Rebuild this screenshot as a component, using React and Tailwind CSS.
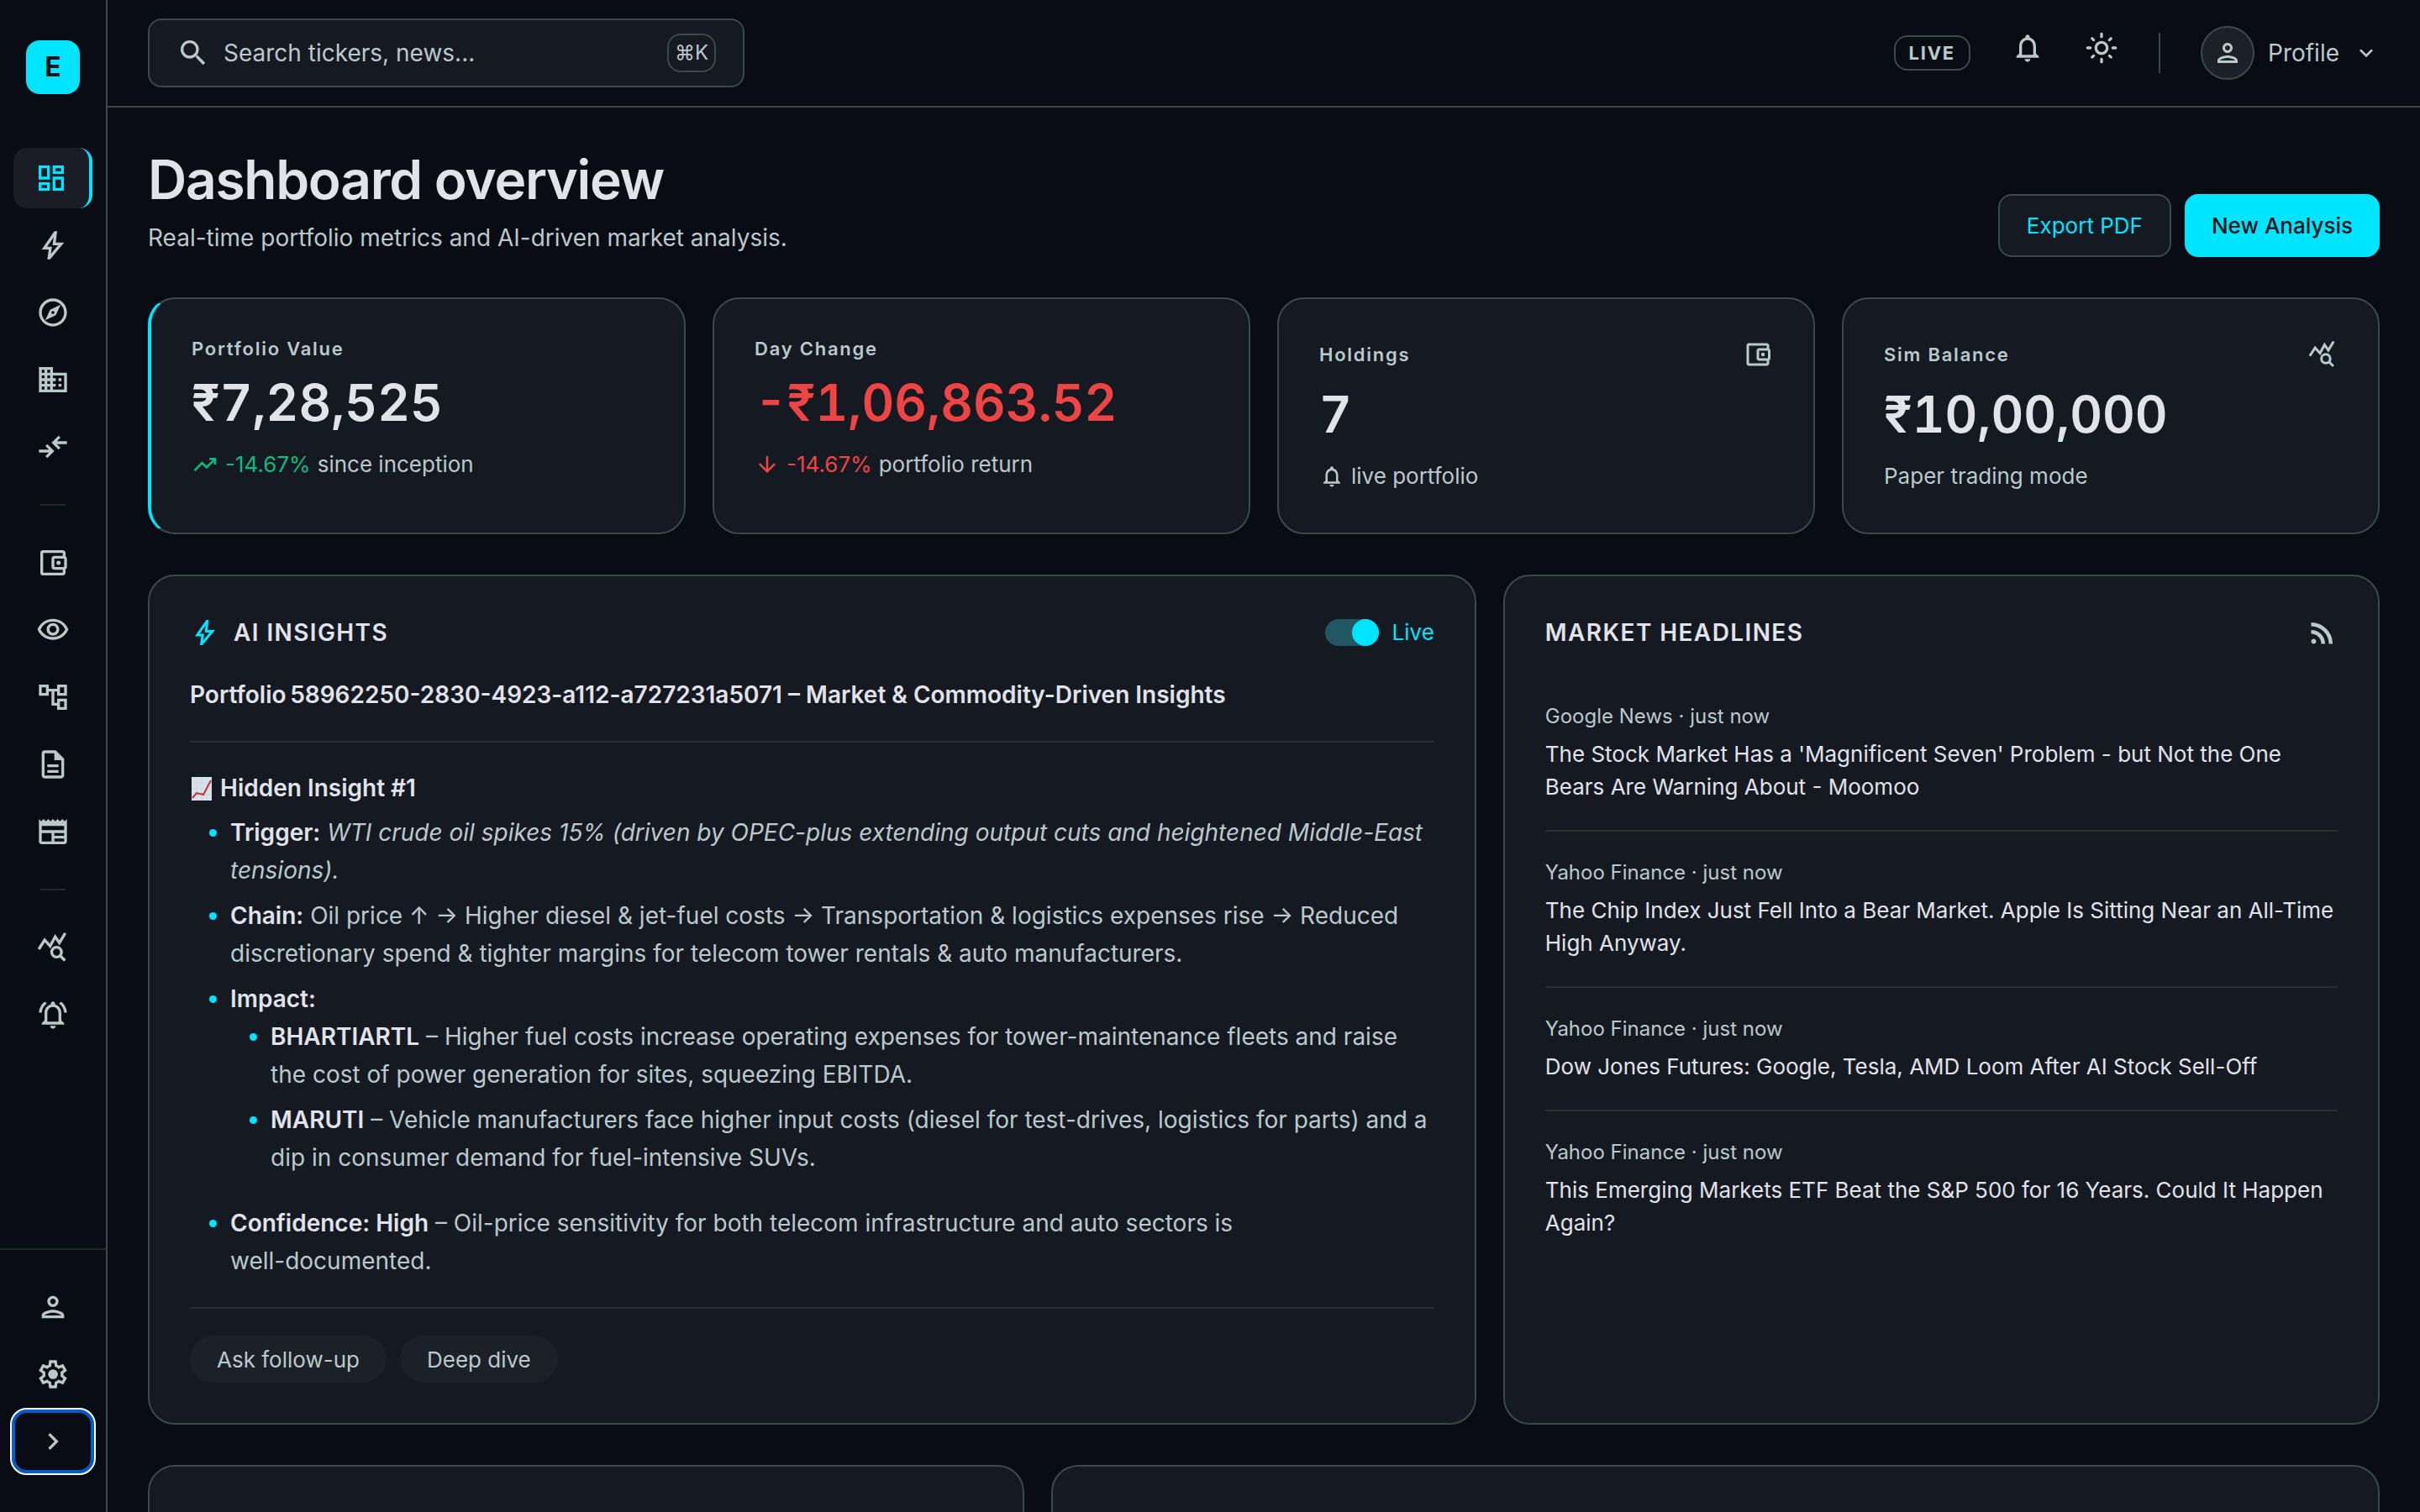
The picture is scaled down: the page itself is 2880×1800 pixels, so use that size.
import {
  MdChevronRight,
  MdDomain,
  MdExpandMore,
  MdOutlineAccountBalanceWallet,
  MdOutlineAccountTree,
  MdOutlineDescription,
  MdOutlineExplore,
  MdOutlineLightMode,
  MdOutlineNewspaper,
  MdOutlineNotifications,
  MdOutlineNotificationsActive,
  MdOutlinePerson,
  MdOutlineVisibility,
  MdSearch,
} from 'react-icons/md'

// Material Symbols outlines that react-icons only ships in the older style
function Symbol({ d, className }) {
  return (
    <svg viewBox="0 -960 960 960" fill="currentColor" aria-hidden="true" className={className}>
      <path d={d} />
    </svg>
  )
}

const DashboardIcon = ({ className }) => (
  <Symbol className={className} d="M520-600v-240h320v240H520ZM120-440v-400h320v400H120Zm400 320v-400h320v400H520Zm-400 0v-240h320v240H120Zm80-400h160v-240H200v240Zm400 320h160v-240H600v240Zm0-480h160v-80H600v80ZM200-200h160v-80H200v80Z" />
)
const BoltIcon = ({ className }) => (
  <Symbol className={className} d="m422-232 207-248H469l29-227-185 267h139l-30 208ZM320-80l40-280H160l360-520h80l-40 320h240L400-80h-80Z" />
)
const CompareIcon = ({ className }) => (
  <Symbol className={className} d="m320-160-56-57 103-103H80v-80h287L264-503l56-57 200 200-200 200Zm320-240L440-600l200-200 56 57-103 103h287v80H593l103 103-56 57Z" />
)
const TrendingUpIcon = ({ className }) => (
  <Symbol className={className} d="m136-240-56-56 296-298 160 160 208-206H640v-80h240v240h-80v-104L536-320 376-480 136-240Z" />
)
const ArrowDownIcon = ({ className }) => (
  <Symbol className={className} d="M440-800v487L216-537l-56 57 320 320 320-320-56-57-224 224v-487h-80Z" />
)
const RssIcon = ({ className }) => (
  <Symbol className={className} d="M200-120q-33 0-56.5-23.5T120-200q0-33 23.5-56.5T200-280q33 0 56.5 23.5T280-200q0 33-23.5 56.5T200-120Zm480 0q0-117-44-218.5T516-516q-76-76-177.5-120T120-680v-120q142 0 265 53t216 146q93 93 146 216t53 265H680Zm-240 0q0-67-25-124.5T346-346q-44-44-101.5-69T120-440v-120q92 0 171.5 34.5T431-431q60 60 94.5 139.5T560-120H440Z" />
)
const SettingsIcon = ({ className }) => (
  <Symbol className={className} d="m370-80-16-128q-13-5-24.5-12T307-235l-119 50L78-375l103-78q-1-7-1-13.5v-27q0-6.5 1-13.5L78-585l110-190 119 50q11-8 23-15t24-12l16-128h220l16 128q13 5 24.5 12t22.5 15l119-50 110 190-103 78q1 7 1 13.5v27q0 6.5-2 13.5l103 78-110 190-118-50q-11 8-23 15t-24 12L590-80H370Zm70-80h79l14-106q31-8 57.5-23.5T639-327l99 41 39-68-86-65q5-14 7-29.5t2-31.5q0-16-2-31.5t-7-29.5l86-65-39-68-99 42q-22-23-48.5-38.5T533-694l-13-106h-79l-14 106q-31 8-57.5 23.5T321-633l-99-41-39 68 86 64q-5 15-7 30t-2 32q0 16 2 31t7 30l-86 65 39 68 99-42q22 23 48.5 38.5T427-266l13 106Zm42-180q58 0 99-41t41-99q0-58-41-99t-99-41q-59 0-99.5 41T342-480q0 58 40.5 99t99.5 41Z" />
)
const QueryStatsIcon = ({ className }) => (
  <svg viewBox="0 0 24 24" fill="none" stroke="currentColor" strokeWidth="2" aria-hidden="true" className={className}>
    <path d="M1.9 13.2 6.1 6.6l3.9 4.4 3.6-6.7 3 4.4 4.2-7" />
    <circle cx="14.6" cy="15.3" r="3.5" />
    <path d="m17 17.7 3.6 3.6" />
  </svg>
)

function ChartEmoji() {
  return (
    <svg viewBox="0 0 28 28" role="img" aria-label="Chart increasing" className="size-7 shrink-0">
      <rect x="2" y="0" width="24" height="28" fill="#d9e1ea" />
      <path d="M2 7h24M2 14h24M2 21h24M8 0v28M14 0v28M20 0v28" stroke="#ccd7e2" strokeWidth="1" />
      <path d="m3 25 5-6 8 2 9-17" fill="none" stroke="#c4303a" strokeWidth="2" />
    </svg>
  )
}

const navGroups = [
  [
    { label: 'Dashboard', Icon: DashboardIcon, active: true },
    { label: 'Insights', Icon: BoltIcon },
    { label: 'Explore', Icon: MdOutlineExplore },
    { label: 'Companies', Icon: MdDomain },
    { label: 'Compare', Icon: CompareIcon },
  ],
  [
    { label: 'Portfolio', Icon: MdOutlineAccountBalanceWallet },
    { label: 'Watchlist', Icon: MdOutlineVisibility },
    { label: 'Supply chain', Icon: MdOutlineAccountTree },
    { label: 'Reports', Icon: MdOutlineDescription },
    { label: 'News', Icon: MdOutlineNewspaper },
  ],
  [
    { label: 'Simulator', Icon: QueryStatsIcon },
    { label: 'Alerts', Icon: MdOutlineNotificationsActive },
  ],
]

const headlines = [
  { source: 'Google News', title: "The Stock Market Has a 'Magnificent Seven' Problem - but Not the One Bears Are Warning About - Moomoo" },
  { source: 'Yahoo Finance', title: 'The Chip Index Just Fell Into a Bear Market. Apple Is Sitting Near an All-Time High Anyway.' },
  { source: 'Yahoo Finance', title: 'Dow Jones Futures: Google, Tesla, AMD Loom After AI Stock Sell-Off' },
  { source: 'Yahoo Finance', title: 'This Emerging Markets ETF Beat the S&P 500 for 16 Years. Could It Happen Again?' },
]

function NavItem({ label, Icon, active }) {
  return (
    <a
      href="#"
      aria-label={label}
      className={`flex h-[72px] items-center justify-center rounded-2xl ${
        active ? 'border-r-4 border-[#00e5ff] bg-[#1a1d25] text-[#00e5ff]' : 'text-[#bac9cc]'
      }`}
    >
      <Icon className="size-10" />
    </a>
  )
}

function Sidebar() {
  return (
    <aside className="flex w-32 shrink-0 flex-col border-r-2 border-[#3b494c]">
      <div className="flex justify-center pt-12 pb-16">
        <div className="flex size-16 items-center justify-center rounded-2xl bg-[#00e5ff] text-[32px] font-bold text-[#061318]">
          E
        </div>
      </div>
      <nav className="flex flex-1 flex-col gap-2 px-4">
        {navGroups.map((group, i) => (
          <div key={i} className="flex flex-col gap-2">
            {i > 0 && <hr className="mx-8 my-6 border-t-2 border-[#22272b]" />}
            {group.map(item => (
              <NavItem key={item.label} {...item} />
            ))}
          </div>
        ))}
      </nav>
      <div className="flex flex-col gap-2 border-t-2 border-[#1f282b] px-4 pt-8 pb-12">
        <NavItem label="Account" Icon={MdOutlinePerson} />
        <NavItem label="Settings" Icon={SettingsIcon} />
        <button
          aria-label="Expand sidebar"
          className="flex h-[72px] items-center justify-center rounded-2xl text-[#bac9cc] shadow-[0_0_0_2px_#0560cc,inset_0_0_0_2px_#0560cc] outline-2 outline-offset-2 outline-white"
        >
          <MdChevronRight className="size-10" />
        </button>
      </div>
    </aside>
  )
}

function Header() {
  return (
    <header className="flex h-32 items-center justify-between border-b-2 border-[#3b494c] px-12">
      <label className="flex h-[82px] w-[710px] items-center gap-4 rounded-2xl border-2 border-[#3b494c] bg-[#151a22] px-8">
        <MdSearch className="size-10 shrink-0 text-[#bac9cc]" />
        <input
          type="text"
          aria-label="Search"
          placeholder="Search tickers, news..."
          className="min-w-0 flex-1 bg-transparent text-[28px] outline-none placeholder:text-[#bac9cc]"
        />
        <kbd className="flex h-[46px] w-[58px] shrink-0 items-center justify-center rounded-2xl border-2 border-[#3b494c] font-['Inter','DejaVu_Sans',sans-serif] text-2xl text-[#bac9cc]">
          ⌘K
        </kbd>
      </label>
      <div className="flex items-center text-[#bac9cc]">
        <span className="flex h-[42px] items-center rounded-2xl border-2 border-[#3b494c] px-4 text-[22px] font-bold tracking-[0.08em]">
          LIVE
        </span>
        <button aria-label="Notifications" className="ml-12 flex h-[52px] items-start">
          <MdOutlineNotifications className="size-10" />
        </button>
        <button aria-label="Toggle theme" className="ml-12 flex h-[52px] items-start">
          <MdOutlineLightMode className="size-10" />
        </button>
        <div className="ml-12 h-12 w-0.5 bg-[#3b494c]" />
        <button className="ml-12 flex items-center gap-4 text-[28px]">
          <span className="flex size-16 items-center justify-center rounded-full border-2 border-[#3b494c] bg-[#1c2129]">
            <MdOutlinePerson className="size-9" />
          </span>
          Profile
          <MdExpandMore className="size-8" />
        </button>
      </div>
    </header>
  )
}

function StatCard({ label, value, Icon, accent, negative, children }) {
  return (
    <div className={`rounded-[32px] border-2 border-[#3b494c] bg-[#151a22] px-12 pt-12 pb-[46px] ${accent ? 'border-l-4 border-l-[#00e5ff]' : ''}`}>
      <div className="flex items-center justify-between">
        <p className="text-[22px] leading-[22px] font-semibold tracking-[0.08em] text-[#bac9cc]">{label}</p>
        {Icon && <Icon className="size-9 text-[#bac9cc]" />}
      </div>
      <p className={`mt-4 text-[60px] leading-[74px] font-semibold tabular-nums ${negative ? 'text-[#ef4444]' : 'text-[#e2e2eb]'}`}>
        {value}
      </p>
      <p className="mt-4 flex items-center gap-2 text-[26px] leading-[42px] text-[#bac9cc]">{children}</p>
    </div>
  )
}

function Insights() {
  return (
    <section className="col-span-3 rounded-[32px] border-2 border-[#3b494c] bg-[#151a22] p-12">
      <div className="flex items-center justify-between">
        <h2 className="flex items-center gap-4 text-[28px] leading-[38px] font-semibold tracking-wider">
          <BoltIcon className="size-9 text-[#00e5ff]" />
          AI INSIGHTS
        </h2>
        <label className="flex items-center gap-4 text-[26px] leading-[38px] text-[#00e5ff]">
          <span className="flex h-8 w-16 justify-end rounded-full bg-[#205762]">
            <input type="checkbox" role="switch" defaultChecked className="size-8 appearance-none rounded-full bg-[#00e5ff]" />
          </span>
          Live
        </label>
      </div>
      <h3 className="mt-8 border-b-2 border-[#262e34] pb-8 text-[28px] leading-[46px] font-semibold">
        Portfolio&#8239;58962250-2830-4923-a112-a727231a5071 – Market &amp; Commodity-Driven Insights
      </h3>
      <div className="mt-8 text-[28px] leading-[45px] text-[#bac9cc]">
        <h4 className="flex items-center gap-2 font-semibold text-[#e2e2eb]">
          <ChartEmoji />
          Hidden Insight #1
        </h4>
        <ul className="mt-2 flex list-disc flex-col gap-[9px] pl-12 marker:text-[#00e5ff]">
          <li>
            <strong className="font-semibold text-[#e2e2eb]">Trigger:</strong>{' '}
            <em>WTI crude oil spikes 15% (driven by OPEC-plus extending output cuts and heightened Middle-East tensions).</em>
          </li>
          <li>
            <strong className="font-semibold text-[#e2e2eb]">Chain:</strong> Oil price ↑ → Higher diesel &amp; jet-fuel
            costs → Transportation &amp; logistics expenses rise → Reduced discretionary spend &amp; tighter margins for
            telecom tower rentals &amp; auto manufacturers.
          </li>
          <li>
            <strong className="font-semibold text-[#e2e2eb]">Impact:</strong>
            <ul className="mb-6 flex list-disc flex-col gap-[9px] pl-12">
              <li>
                <strong className="font-semibold text-[#e2e2eb]">BHARTIARTL</strong> – Higher fuel costs increase
                operating expenses for tower-maintenance fleets and raise the cost of power generation for sites,
                squeezing EBITDA.
              </li>
              <li>
                <strong className="font-semibold text-[#e2e2eb]">MARUTI</strong> – Vehicle manufacturers face higher
                input costs (diesel for test-drives, logistics for parts) and a dip in consumer demand for
                fuel-intensive SUVs.
              </li>
            </ul>
          </li>
          <li>
            <strong className="font-semibold text-[#e2e2eb]">Confidence: High</strong> – Oil-price sensitivity for both
            telecom infrastructure and auto sectors is <span className="inline-block">well-documented.</span>
          </li>
        </ul>
      </div>
      <div className="mt-8 flex gap-4 border-t-2 border-[#262e34] pt-8 text-[26px] text-[#bac9cc]">
        <button className="h-14 rounded-full bg-[#1c2129] px-8">Ask follow-up</button>
        <button className="h-14 rounded-full bg-[#1c2129] px-8">Deep dive</button>
      </div>
    </section>
  )
}

function Headlines() {
  return (
    <section className="col-span-2 rounded-[32px] border-2 border-[#3b494c] bg-[#151a22] p-12">
      <div className="mb-8 flex items-center justify-between">
        <h2 className="text-[28px] leading-[38px] font-semibold tracking-wider">MARKET HEADLINES</h2>
        <RssIcon className="size-9 text-[#bac9cc]" />
      </div>
      <ul className="divide-y-2 divide-[#262e34]">
        {headlines.map(item => (
          <li key={item.title} className="py-8">
            <p className="text-2xl leading-[34px] text-[#bac9cc]">{item.source} · just now</p>
            <a href="#" className="mt-2 block text-[26px] leading-[39px]">
              {item.title}
            </a>
          </li>
        ))}
      </ul>
    </section>
  )
}

export default function App() {
  return (
    <div className="flex h-screen overflow-hidden bg-[#090c14] font-['Inter',sans-serif] text-[#e2e2eb]">
      <Sidebar />
      <div className="flex min-w-0 flex-1 flex-col">
        <Header />
        <main className="flex-1 overflow-hidden p-12">
          <div className="flex items-end justify-between">
            <div>
              <h1 className="text-[64px] leading-[76px] font-semibold tracking-[-0.02em]">Dashboard overview</h1>
              <p className="mt-2 text-[28px] leading-[46px] text-[#bac9cc]">
                Real-time portfolio metrics and AI-driven market analysis.
              </p>
            </div>
            <div className="flex gap-4 text-[26px] font-medium">
              <button className="h-[75px] rounded-2xl border-2 border-[#3b494c] bg-[#151a22] px-8 font-normal text-[#00e5ff]">
                Export PDF
              </button>
              <button className="h-[75px] rounded-2xl bg-[#00e5ff] px-8 text-[#061318]">New Analysis</button>
            </div>
          </div>

          {/* Key metrics */}
          <div className="mt-12 grid grid-cols-4 gap-8">
            <StatCard label="Portfolio Value" value="₹7,28,525" accent>
              <TrendingUpIcon className="size-8 text-[#10b981]" />
              <span className="text-[#10b981]">-14.67%</span> since inception
            </StatCard>
            <StatCard label="Day Change" value="-₹1,06,863.52" negative>
              <ArrowDownIcon className="size-[30px] text-[#ef4444]" />
              <span className="text-[#ef4444]">-14.67%</span> portfolio return
            </StatCard>
            <StatCard label="Holdings" value="7" Icon={MdOutlineAccountBalanceWallet}>
              <MdOutlineNotifications className="size-[30px]" />
              live portfolio
            </StatCard>
            <StatCard label="Sim Balance" value="₹10,00,000" Icon={QueryStatsIcon}>
              Paper trading mode
            </StatCard>
          </div>

          <div className="mt-12 grid grid-cols-5 gap-8">
            <Insights />
            <Headlines />
          </div>

          <div className="mt-12 grid grid-cols-5 gap-8">
            <section className="col-span-2 h-96 rounded-[32px] border-2 border-[#3b494c] bg-[#151a22]" />
            <section className="col-span-3 h-96 rounded-[32px] border-2 border-[#3b494c] bg-[#151a22]" />
          </div>
        </main>
      </div>
    </div>
  )
}
